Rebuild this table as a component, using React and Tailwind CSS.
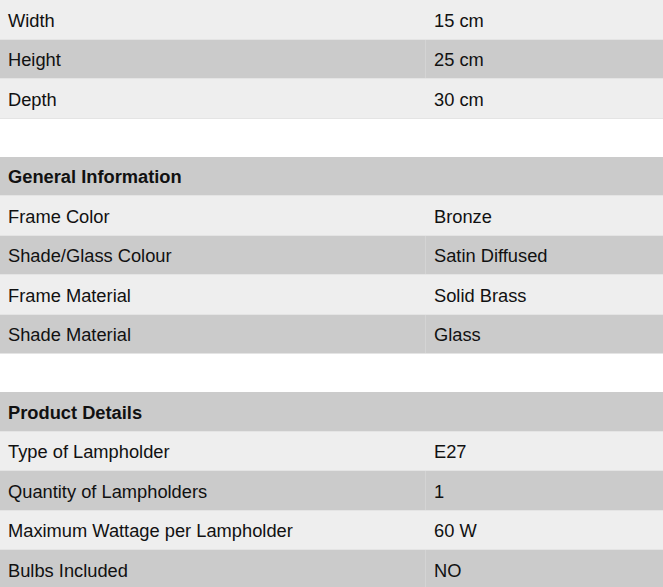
const sections = [
  {
    title: null,
    rows: [
      ["Width", "15 cm"],
      ["Height", "25 cm"],
      ["Depth", "30 cm"],
    ],
  },
  {
    title: "General Information",
    rows: [
      ["Frame Color", "Bronze"],
      ["Shade/Glass Colour", "Satin Diffused"],
      ["Frame Material", "Solid Brass"],
      ["Shade Material", "Glass"],
    ],
  },
  {
    title: "Product Details",
    rows: [
      ["Type of Lampholder", "E27"],
      ["Quantity of Lampholders", "1"],
      ["Maximum Wattage per Lampholder", "60 W"],
      ["Bulbs Included", "NO"],
    ],
  },
];

function SpecRow({ label, value, dark }) {
  return (
    <div
      className={`grid grid-cols-[425px_1fr] h-[39.5px] items-center border-b border-[#e4e4e4] ${
        dark ? "bg-[#cbcbcb]" : "bg-[#eeeeee]"
      }`}
    >
      <span className="pl-2 pt-[2px]">{label}</span>
      <span className={`pl-2 pt-[2px] h-full flex items-center border-l ${dark ? "border-[#d4d4d4]" : "border-[#eeeeee]"}`}>
        {value}
      </span>
    </div>
  );
}

export default function App() {
  return (
    <div className="w-[663px] bg-white text-[18.3px] text-[#111] font-['Liberation_Sans',Arial,sans-serif] flex flex-col gap-[38px]">
      {sections.map((s, i) => (
        <div key={i} className="flex flex-col">
          {s.title && (
            <div className="h-[39.5px] flex items-center pl-2 pt-[2px] bg-[#cbcbcb] font-bold border-b border-[#e4e4e4]">
              {s.title}
            </div>
          )}
          {s.rows.map(([label, value], j) => (
            <SpecRow key={label} label={label} value={value} dark={j % 2 === 1} />
          ))}
        </div>
      ))}
    </div>
  );
}
